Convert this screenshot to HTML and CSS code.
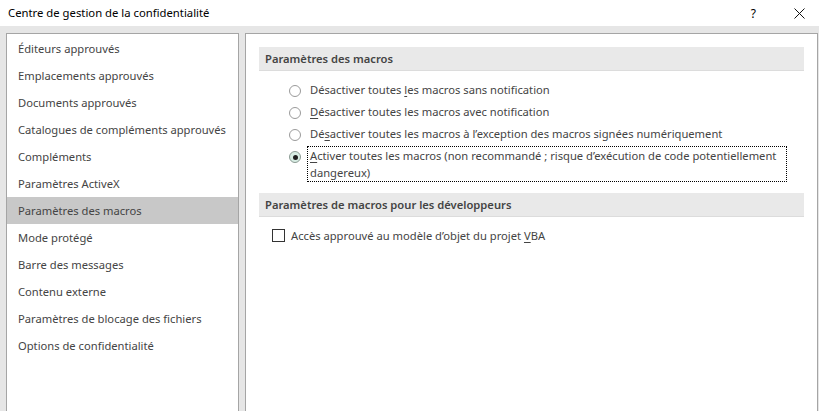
FILE: index.html
```html
<!DOCTYPE html>
<html lang="fr">
<head>
  <meta charset="UTF-8" />
  <title>Centre de gestion de la confidentialité</title>
  <link rel="stylesheet" href="styles.css">
</head>
<body>
  <div class="titlebar">
    <span class="title">Centre de gestion de la confidentialité</span>
    <span class="title-btns">
      <span class="help">?</span>
      <svg class="close" width="11" height="11" viewBox="0 0 11 11"><path d="M0.5 0.5 L10.5 10.5 M10.5 0.5 L0.5 10.5" stroke="#111" stroke-width="1" fill="none"/></svg>
    </span>
  </div>

  <div class="dialog">
    <ul class="nav">
      <li>Éditeurs approuvés</li>
      <li>Emplacements approuvés</li>
      <li>Documents approuvés</li>
      <li>Catalogues de compléments approuvés</li>
      <li>Compléments</li>
      <li>Paramètres ActiveX</li>
      <li class="active">Paramètres des macros</li>
      <li>Mode protégé</li>
      <li>Barre des messages</li>
      <li>Contenu externe</li>
      <li>Paramètres de blocage des fichiers</li>
      <li>Options de confidentialité</li>
    </ul>

    <div class="content">
      <div class="section-head">Paramètres des macros</div>
      <div class="options">
        <div class="radio-row"><span class="radio"></span><span class="label">Désactiver toutes <u>l</u>es macros sans notification</span></div>
        <div class="radio-row"><span class="radio"></span><span class="label"><u>D</u>ésactiver toutes les macros avec notification</span></div>
        <div class="radio-row"><span class="radio"></span><span class="label">Dé<u>s</u>activer toutes les macros à l’exception des macros signées numériquement</span></div>
        <div class="radio-row"><span class="radio checked"></span><span class="label focus"><u>A</u>ctiver toutes les macros (non recommandé ; risque d’exécution de code potentiellement<br>dangereux)</span></div>
      </div>

      <div class="section-head second">Paramètres de macros pour les développeurs</div>
      <div class="check-row"><span class="checkbox"></span><span class="label">Accès approuvé au modèle d’objet du projet <u>V</u>BA</span></div>
    </div>
  </div>
</body>
</html>
```

FILE: styles.css
```css
* { margin: 0; padding: 0; box-sizing: border-box; }
html, body { height: 100%; }
body {
  font-family: "Noto Sans", "Open Sans", sans-serif;
  font-size: 11.2px;
  color: #444;
  background: #e6e6e6;
  overflow: hidden;
}
.titlebar {
  height: 26px;
  background: #fff;
  display: flex;
  align-items: center;
  justify-content: space-between;
  padding: 0 0 0 8px;
  color: #000;
}
.title { font-size: 11.3px; position: relative; top: -1px; }
.title-btns { display: flex; align-items: center; }
.help { font-size: 12px; margin-right: 38px; }
.close { margin-right: 14px; }
.dialog {
  display: flex;
  gap: 6px;
  padding: 7px 1px 0 6px;
  height: calc(100% - 26px);
}
.nav {
  list-style: none;
  width: 233px;
  background: #fff;
  border: 1px solid #a5a5a5;
  border-bottom: none;
  padding-top: 1px;
}
.nav li {
  height: 27px;
  line-height: 27px;
  padding-left: 11px;
  white-space: nowrap;
}
.nav li.active { background: #c8c8c8; }
.content {
  flex: 1;
  background: #fff;
  border: 1px solid #a5a5a5;
  border-bottom: none;
  padding: 13px 13px 0 13px;
}
.section-head {
  background: #e9e9e9;
  border-bottom: 1px solid #dcdcdc;
  height: 24px;
  line-height: 23px;
  padding-left: 6px;
  font-weight: 600;
  color: #444;
}
.section-head.second { margin-top: 12px; }
.options { padding: 10px 0 0 30px; }
.radio-row {
  display: flex;
  align-items: flex-start;
  min-height: 22px;
}
.radio {
  flex: none;
  width: 12px;
  height: 12px;
  border: 1px solid #9a9a9a;
  border-radius: 50%;
  margin: 4px 9px 0 0;
  position: relative;
  background: #fff;
}
.radio.checked { background: #d8ede4; border-color: #8c9b94; }
.radio.checked::after {
  content: "";
  position: absolute;
  left: 2.5px;
  top: 2.5px;
  width: 5px;
  height: 5px;
  border-radius: 50%;
  background: #1e1e1e;
}
.label { line-height: 17px; white-space: nowrap; }
.label.focus {
  outline: 1px dotted #000;
  outline-offset: 0;
  padding-right: 10px;
  margin-left: -2px;
  padding-left: 2px;
}
.check-row {
  display: flex;
  align-items: center;
  padding: 10px 0 0 13px;
}
.checkbox {
  width: 13px;
  height: 13px;
  border: 1px solid #333;
  margin-right: 6px;
  background: #fff;
}
u { text-decoration-thickness: 1px; text-underline-offset: 2px; }
```
